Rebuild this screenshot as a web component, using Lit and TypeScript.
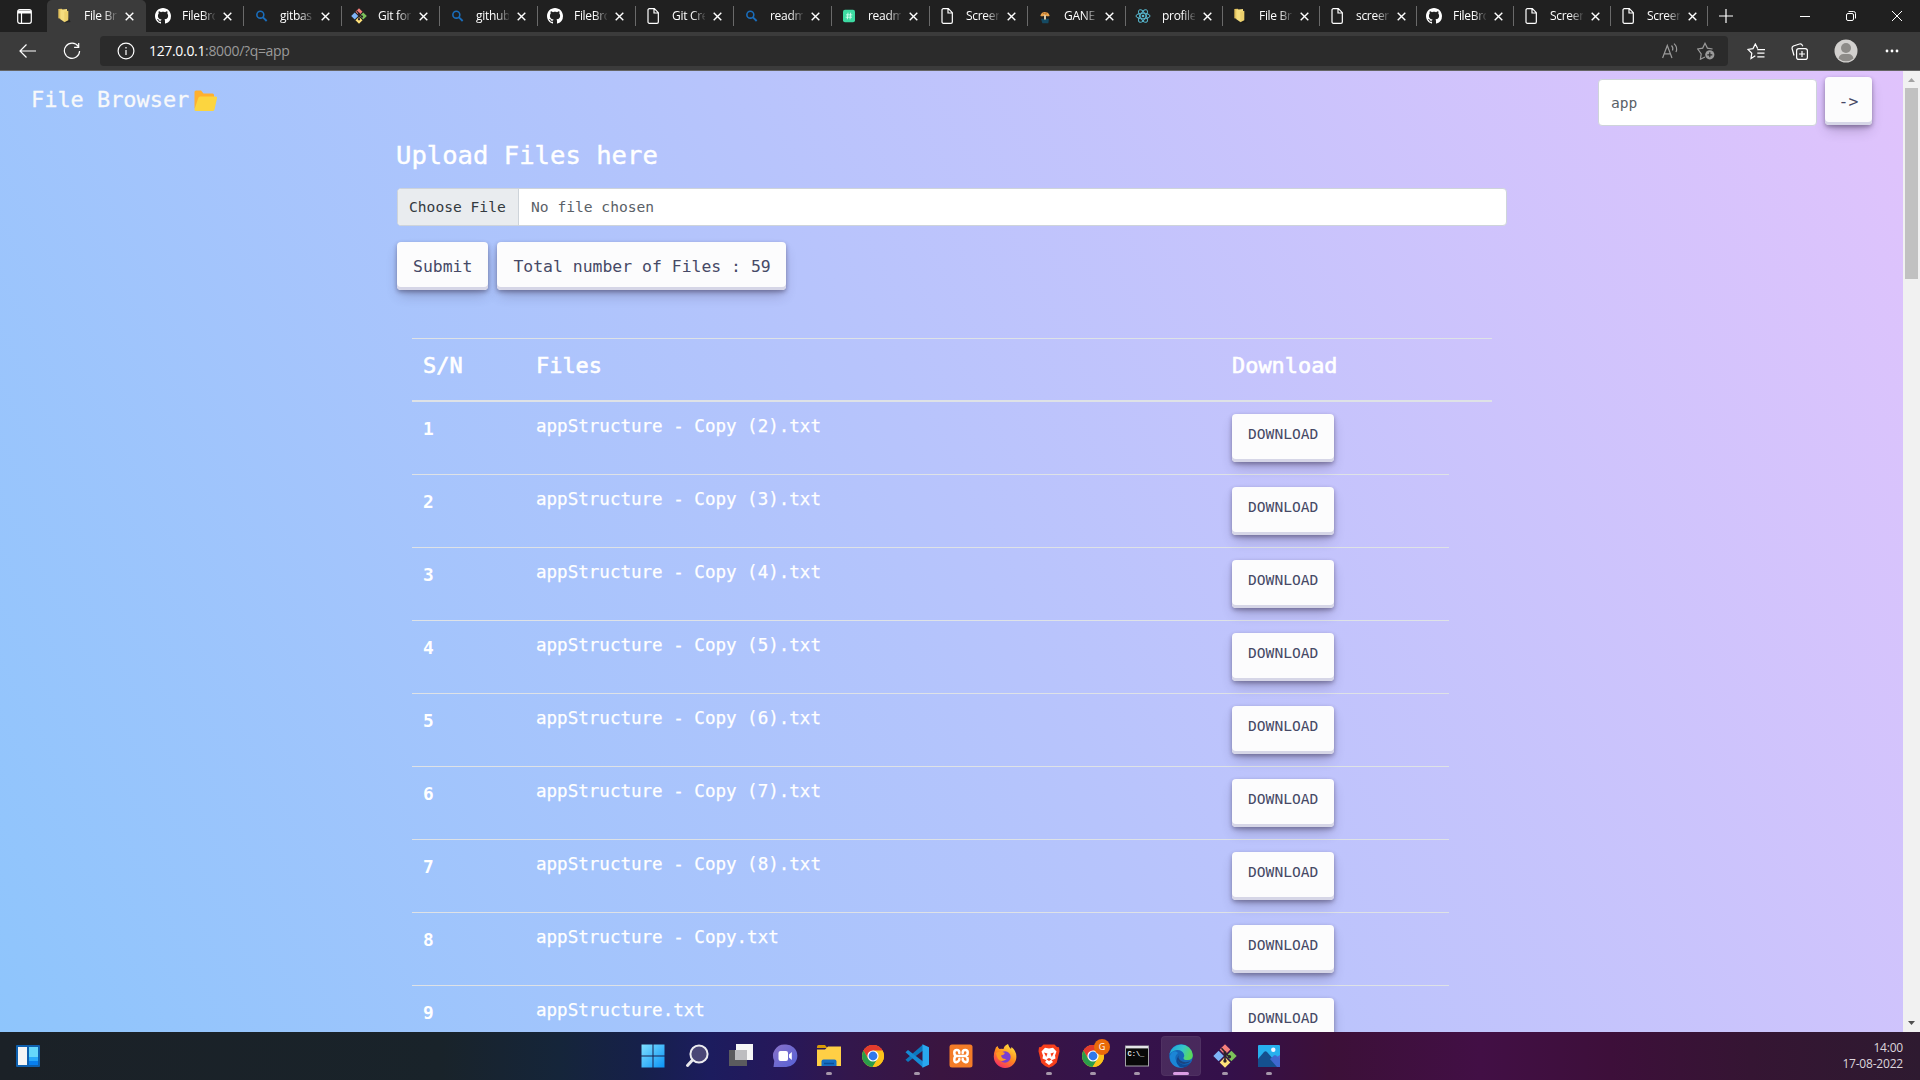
import { LitElement, html, css, svg, TemplateResult } from "lit";
import { customElement, property } from "lit/decorators.js";
import { classMap } from "lit/directives/class-map.js";

const chromeBall = svg`
  <circle cx="12" cy="12" r="11" fill="#fbc116"/>
  <path d="M12 12L2.5 6.5A11 11 0 0 1 21.5 6.5Z" fill="#e33b2e"/>
  <path d="M12 6.5H21.5A11 11 0 0 0 2.5 6.5L7.2 14.7Z" fill="#e33b2e"/>
  <path d="M2.5 6.5A11 11 0 0 0 11.6 23L16.6 14.8 12 12 7.2 14.7Z" fill="#2a9d4a"/>
  <path d="M21.5 6.5A11 11 0 0 1 11.6 23L16.8 14.6 12 6.5Z" fill="#fcc31a"/>
  <circle cx="12" cy="12" r="5.6" fill="#fff"/><circle cx="12" cy="12" r="4.4" fill="#3079ea"/>`;

const gitBash = svg`
  <path d="M12 .3L17.300 5.600 12 10.900 6.700 5.600Z" fill="#f47f7c"/>
  <path d="M18.400 6.700L23.700 12 18.400 17.300 13.100 12Z" fill="#7cc15a"/>
  <path d="M5.600 6.700L10.900 12 5.600 17.300 .3 12Z" fill="#7fb4f7"/>
  <path d="M12 13.100L17.300 18.400 12 23.700 6.700 18.400Z" fill="#ffe27a"/>
  <path d="M8.500 4.300L12 8V17M12 9l4.500 4" stroke="#2d2229" stroke-width="1.600" fill="none"/>
  <circle cx="12" cy="9" r="1.700" fill="#2d2229"/><circle cx="12" cy="17" r="1.700" fill="#2d2229"/><circle cx="16.500" cy="12.800" r="1.700" fill="#2d2229"/>`;

const favicons: Record<string, TemplateResult> = {
  folder: svg`<path d="M18 13l4 8-9 1z" fill="#141414" opacity=".55"/><path d="M3.500 1.500l5-.5 1 .8V17l-6-1.500Z" fill="#e3c25e"/><path d="M6.500 2.500L16.500 1.500V17l-4 4-6-4Z" fill="#f5dd7e"/><path d="M12.500 5.500L18.500 4v14.500l-6 3Z" fill="#ecd06c"/>`,
  github: svg`<path transform="scale(1.5)" fill="#fff" d="M8 0C3.58 0 0 3.58 0 8c0 3.54 2.29 6.53 5.47 7.59.4.07.55-.17.55-.38 0-.19-.01-.82-.01-1.49-2.01.37-2.53-.49-2.69-.94-.09-.23-.48-.94-.82-1.13-.28-.15-.68-.52-.01-.53.63-.01 1.08.58 1.23.82.72 1.21 1.87.87 2.33.66.07-.52.28-.87.51-1.07-1.78-.2-3.64-.89-3.64-3.95 0-.87.31-1.59.82-2.15-.08-.2-.36-1.02.08-2.12 0 0 .67-.21 2.2.82.64-.18 1.32-.27 2-.27s1.36.09 2 .27c1.53-1.04 2.2-.82 2.2-.82.44 1.1.16 1.92.08 2.12.51.56.82 1.27.82 2.15 0 3.07-1.87 3.75-3.65 3.95.29.25.54.73.54 1.48 0 1.07-.01 1.93-.01 2.2 0 .21.15.46.55.38A8.01 8.01 0 0 0 16 8c0-4.42-3.58-8-8-8z"/>`,
  search: svg`<circle cx="11" cy="10" r="5.2" fill="none" stroke="#1a6dbb" stroke-width="2.4"/><path d="M15 14l5.5 5.5" stroke="#1a6dbb" stroke-width="2.8"/>`,
  git: gitBash,
  doc: svg`<path d="M4.500 3a2 2 0 0 1 2-2h7.500l6 6v14a2 2 0 0 1-2 2h-11.500a2 2 0 0 1-2-2ZM13.500 1v6.500h6.500" fill="none" stroke="#fff" stroke-width="1.800"/>`,
  hash: svg`<rect x="3" y="2.500" width="18" height="19" rx="3" fill="#3ddaa2"/><path d="M10.500 7l-1 10M14.500 7l-1 10M7.500 10.300h9.500M7 13.800h9.500" stroke="#d8fff0" stroke-width="1.300"/>`,
  tree: svg`<path d="M5 12a7.200 8 0 0 1 14 0q-3 1-5 0l-2 1-2-1q-2 1-5 0Z" fill="#e9a24a"/><path d="M9 7l2 2M14 6l-1 4" stroke="#9c5c22" stroke-width="1.500"/><path d="M10.500 10h3v9h-3z" fill="#d9c9a8"/><path d="M6 16h4l2 2 2-2h4l-1 7H8Z" fill="#154a63"/>`,
  react: svg`<g fill="none" stroke="#58b9d0" stroke-width="1.500"><ellipse cx="12" cy="12" rx="10.500" ry="4.200"/><ellipse cx="12" cy="12" rx="10.500" ry="4.200" transform="rotate(60 12 12)"/><ellipse cx="12" cy="12" rx="10.500" ry="4.200" transform="rotate(120 12 12)"/></g><circle cx="12" cy="12" r="2" fill="#58b9d0"/>`,
};

const tabs: Array<[string, string]> = [
  ["folder", "File Br"], ["github", "FileBro"], ["search", "gitbas"], ["git", "Git for"],
  ["search", "github"], ["github", "FileBro"], ["doc", "Git Cre"], ["search", "readm"],
  ["hash", "readm"], ["doc", "Screen"], ["tree", "GANE"], ["react", "profile"],
  ["folder", "File Br"], ["doc", "screen"], ["github", "FileBro"], ["doc", "Screen"], ["doc", "Screen"],
];

@customElement("browser-tab")
class BrowserTab extends LitElement {
  @property() icon = "";
  @property() label = "";
  @property({ type: Boolean }) active = false;
  static styles = css`
    :host { display: block; flex: none; height: 32px; }
    .tab { display: flex; align-items: center; height: 32px; box-sizing: border-box; position: relative; padding-left: 9px; }
    .tab.active { background: #3b3b3b; border-radius: 5px 5px 0 0; margin-left: -1px; padding-left: 9px; }
    .tab:not(.active)::after { content: ""; position: absolute; right: 0; top: 6px; width: 1px; height: 20px; background: #6a6a6a; }
    .fav { width: 16px; height: 16px; flex: none; }
    .label { width: 33px; margin-left: 11px; white-space: nowrap; color: #fff;
      font: 12px/18px "Open Sans", "Noto Sans", sans-serif; letter-spacing: -0.3px;
      -webkit-mask-image: linear-gradient(90deg, #000 60%, transparent 105%); mask-image: linear-gradient(90deg, #000 60%, transparent 105%); }
    .active .label { margin-left: 12px; }
    .x { width: 9px; height: 9px; margin-left: 8px; margin-top: 1px; flex: none; }
  `;
  render() {
    return html`<div class=${classMap({ tab: true, active: this.active })}>
      <svg class="fav" viewBox="0 0 24 24">${favicons[this.icon]}</svg>
      <span class="label">${this.label}</span>
      <svg class="x" viewBox="0 0 9 9"><path d="M.7 .7l7.600 7.600M8.300 .7L.7 8.300" stroke="#fff" stroke-width="1.400"/></svg>
    </div>`;
  }
}

@customElement("browser-chrome")
class BrowserChrome extends LitElement {
  static styles = css`
    :host { display: block; }
    svg { display: block; flex: none; fill: none; stroke: #fff; stroke-width: 1.2; }
    .strip { display: flex; height: 32px; background: #202020; }
    .menu { width: 48px; display: flex; align-items: center; justify-content: center; box-sizing: border-box; }
    .wide { width: 98px; }
    .narrow { width: 97px; }
    .plus { width: 35px; display: flex; align-items: center; justify-content: center; }
    .window { margin-left: auto; display: flex; align-items: center; }
    .window span { width: 46px; display: flex; justify-content: center; }
    .bar { display: flex; align-items: center; height: 38px; background: #3b3b3b; border-bottom: 1px solid #656565; }
    .nav { display: flex; width: 100px; align-items: center; padding-left: 19px; gap: 27px; box-sizing: border-box; }
    .url { display: flex; align-items: center; width: 1628px; height: 30px; border-radius: 4px; background: #2b2b2b; padding: 0 14px 0 17px; box-sizing: border-box;
      font: 14px/20px "Open Sans", "Noto Sans", sans-serif; letter-spacing: -0.33px; color: #9a9a9a; margin-top: -1px; }
    .url b { font-weight: 400; color: #fff; }
    .addr { margin-left: 14px; flex: 1; }
    .url svg.dim { stroke: #9b9b9b; }
    .url .star { margin-left: 18px; margin-right: -1px; }
    .tools { display: flex; align-items: center; flex: 1; padding-left: 19px; }
    .coll { margin-left: 25px; }
    .avatar { margin-left: 26px; }
    .dots { margin-left: 27px; }
  `;
  render() {
    return html`
      <div class="strip">
        <div class="menu"><svg width="15" height="15" viewBox="0 0 15 15"><rect x=".7" y=".7" width="13.600" height="13.600" rx="2"/><path d="M1 3h13" stroke-width="3"/><path d="M4.500 4v10"/></svg></div>
        ${tabs.map(([icon, label], i) => html`<browser-tab class=${i < 11 ? "wide" : "narrow"} icon=${icon} label=${label} ?active=${i === 0}></browser-tab>`)}
        <div class="plus"><svg width="14" height="14" viewBox="0 0 14 14"><path d="M7 0v14M0 7h14"/></svg></div>
        <div class="window">
          <span><svg width="10" height="10" viewBox="0 0 10 10"><path d="M0 5.500h10" stroke-width="1"/></svg></span>
          <span><svg width="10" height="10" viewBox="0 0 10 10"><rect x=".5" y="2.500" width="7" height="7" rx="1.500" stroke-width="1"/><path d="M2.500.5h5a2 2 0 0 1 2 2v5" stroke-width="1"/></svg></span>
          <span><svg width="10" height="10" viewBox="0 0 10 10"><path d="M0 0l10 10M10 0L0 10" stroke-width="1"/></svg></span>
        </div>
      </div>
      <div class="bar">
        <div class="nav">
          <svg width="17" height="14" viewBox="0 0 17 14"><path d="M17 7H1.200M7.500 .5L1 7l6.500 6.500"/></svg>
          <svg width="18" height="18" viewBox="0 0 18 18"><path d="M15.300 4.500A7.600 7.600 0 1 0 16.600 9M15.700 1v4.300h-4.600"/></svg>
        </div>
        <div class="url">
          <svg width="18" height="18" viewBox="0 0 18 18"><circle cx="9" cy="9" r="7.900"/><path d="M9 8v5M9 5v1.500"/></svg>
          <span class="addr"><b>127.0.0.1</b>:8000/?q=app</span>
          <svg class="dim" width="17" height="16" viewBox="0 0 17 16"><path d="M.6 15L5.300 2.500 10 15M2.200 10.800h6.200M9.500 2.500q2 2 1 5M12 .6q4 3.400 2 8.400"/></svg>
          <svg class="dim star" width="18" height="18" viewBox="0 0 18 18"><path d="M8 15l-4.600 2.200 .8-5.300L.7 7l5-.9L8 1.300l2.400 4.800 5.200.9"/><circle cx="12.800" cy="12.800" r="4.600" fill="#9b9b9b" stroke="none"/><path d="M12.800 10.300v5M10.300 12.800h5" stroke="#2b2b2b"/></svg>
        </div>
        <div class="tools">
          <svg width="19" height="17" viewBox="0 0 19 17"><path d="M8.300 12.800L4 15.500l.8-5.300L1 6.500l5-.9L8.300 1l2.400 4.600M10.300 6.600H18M10.300 10.200h7.200M10.300 13.800h7.200"/></svg>
          <svg class="coll" width="17" height="17" viewBox="0 0 17 17"><rect x="5.600" y="5.600" width="10.800" height="10.800" rx="2.200"/><path d="M11 8v6M8 11h6M3 12.500L1.200 6q-.6-2 1.200-3L8.500 1q2-.6 2.800 1.200l.5 1"/></svg>
          <svg class="avatar" width="24" height="24" viewBox="0 0 24 24" stroke="none"><circle cx="12" cy="12" r="11.500" fill="#d2d0ce" stroke="none"/><circle cx="12" cy="9" r="5" fill="#8d8b88" stroke="none"/><path d="M4.500 19.500q1-4.500 5-4.500h5q4 0 5 4.500a11.500 11.500 0 0 1-15 0Z" fill="#8d8b88" stroke="none"/></svg>
          <svg class="dots" width="14" height="4" viewBox="0 0 14 4"><g fill="#fff" stroke="none"><circle cx="2" cy="2" r="1.400"/><circle cx="7" cy="2" r="1.400"/><circle cx="12" cy="2" r="1.400"/></g></svg>
        </div>
      </div>`;
  }
}

const files = [
  "appStructure - Copy (2).txt", "appStructure - Copy (3).txt", "appStructure - Copy (4).txt",
  "appStructure - Copy (5).txt", "appStructure - Copy (6).txt", "appStructure - Copy (7).txt",
  "appStructure - Copy (8).txt", "appStructure - Copy.txt", "appStructure.txt",
];

@customElement("file-page")
class FilePage extends LitElement {
  static styles = css`
    :host { display: flex; height: 961px; overflow: hidden; font-family: "DejaVu Sans Mono", "Liberation Mono", monospace; }
    .content { width: 1903px; height: 961px; overflow: hidden; background: linear-gradient(62deg, #8ec5fc 0%, #e0c3fc 100%); }
    .top { display: flex; height: 60px; padding: 6px 31px 0 31px; box-sizing: border-box; align-items: flex-start; }
    .brand { display: flex; align-items: center; height: 44px; font-size: 21.92px; color: #f8f9fa; flex: 1; -webkit-text-stroke: .3px #f8f9fa; }
    .brand svg { width: 25px; height: 22px; margin: 3px 0 0 4px; }
    .query { width: 219px; height: 47px; margin: 2px 8px 0 0; box-sizing: border-box; border: 1px solid #ced4da; border-radius: 4px; background: #fff; color: #5a6168; font-size: 14.62px; line-height: 46px; padding-left: 12px; }
    .btn { display: inline-flex; align-items: center; height: 48px; box-sizing: border-box; padding: 0 16px; border-radius: 4px; background: #fcfcfd; color: #464966; font-size: 16.44px; white-space: pre;
      box-shadow: rgba(45,35,66,.4) 0 2px 4px, rgba(45,35,66,.3) 0 7px 13px -3px, #d6d6e7 0 -3px 0 inset; }
    .top .btn { width: 47px; padding: 1px 0 0; justify-content: center; }
    .body { width: 1110px; margin-left: 397px; }
    h3 { margin: 0; font-weight: 400; font-size: 25.58px; line-height: 34px; color: #fff; padding-top: 7px; -webkit-text-stroke: .4px #fff; margin-left: -1px; }
    .picker { display: flex; height: 38px; margin-top: 16px; box-sizing: border-box; border: 1px solid #ced4da; border-radius: 4px; overflow: hidden; background: #fff; font-size: 14.62px; line-height: 36px; color: #5a6168; }
    .choose { width: 121px; box-sizing: border-box; padding-left: 11px; background: #e9ecef; color: #343a40; border-right: 1px solid #ced4da; }
    .none { padding-left: 12px; }
    .actions { display: flex; gap: 9px; margin-top: 16px; }
    .actions .total { padding-right: 15px; }
    .table { margin: 48px 15px 0; color: #fff; }
    .head, .row { display: grid; grid-template-columns: 112px 696px 1fr; box-sizing: border-box; }
    .head > span, .row > span { padding-left: 12px; }
    .head { height: 64px; border-top: 1px solid #dee2e6; border-bottom: 2px solid #dee2e6; font-size: 21.92px; line-height: 54px; -webkit-text-stroke: .6px #fff; }
    .head > .sn, .row > .num { padding-left: 11px; }
    .row { width: 1037px; height: 73px; border-bottom: 1px solid #dee2e6; font-size: 17.54px; }
    .num { font-weight: 700; line-height: 53px; font-size: 17.8px; }
    .name { line-height: 48px; -webkit-text-stroke: .25px #fff; }
    .row .btn { margin-top: 12px; font-size: 14.62px; padding-bottom: 10px; }
    .scroll { display: flex; flex-direction: column; align-items: center; width: 17px; background: #f1f1f1; box-sizing: border-box; }
    .arrow { width: 17px; height: 17px; display: block; }
    .thumb { width: 13px; height: 191px; background: #c1c1c1; margin-bottom: auto; }
  `;
  render() {
    return html`
      <div class="content">
        <div class="top">
          <div class="brand">File Browser<svg viewBox="0 0 24 22"><path d="M1 2a1.500 1.500 0 0 1 1.500-1.500h5l2.500 3h9A1.500 1.500 0 0 1 20.500 5v14H2.500A1.500 1.500 0 0 1 1 17.500Z" fill="#ffb02e"/><path d="M4.800 8a2 2 0 0 1 2-1.600h15.200a1.500 1.500 0 0 1 1.500 1.900L21 19.500a2 2 0 0 1-2 1.500H2.500A1.500 1.500 0 0 1 1.100 19Z" fill="#fcd53f"/></svg></div>
          <div class="query">app</div><div class="btn">-&gt;</div>
        </div>
        <div class="body">
          <h3>Upload Files here</h3>
          <div class="picker"><span class="choose">Choose File</span><span class="none">No file chosen</span></div>
          <div class="actions"><div class="btn">Submit</div><div class="btn total">Total number of Files : 59</div></div>
          <div class="table">
            <div class="head"><span class="sn">S/N</span><span>Files</span><span>Download</span></div>
            ${files.map((f, i) => html`<div class="row"><span class="num">${i + 1}</span><span class="name">${f}</span><span><div class="btn">DOWNLOAD</div></span></div>`)}
          </div>
        </div>
      </div>
      <div class="scroll">
        <svg class="arrow" viewBox="0 0 17 17"><path d="M5 11l3.500-4 3.500 4z" fill="#a3a3a3"/></svg>
        <div class="thumb"></div>
        <svg class="arrow" viewBox="0 0 17 17"><path d="M5 6l3.500 4L12 6z" fill="#505050"/></svg>
      </div>`;
  }
}

interface App { art: TemplateResult; state?: string; }
const apps: App[] = [
  { art: svg`<defs><linearGradient id="w" x1="0" y1="0" x2="1" y2="1"><stop offset="0" stop-color="#7fe0ff"/><stop offset="1" stop-color="#0a93f5"/></linearGradient></defs><path d="M.5.5h11v11H.5zM12.500.5h11v11h-11zM.5 12.500h11v11H.5zM12.500 12.500h11v11h-11z" fill="url(#w)"/>` },
  { art: svg`<path d="M8 15.500L2.500 21.500" stroke="#e8e8ec" stroke-width="3" stroke-linecap="round"/><circle cx="14" cy="10" r="8.600" fill="#4a4676" stroke="#ececf0" stroke-width="2"/>` },
  { art: svg`<rect x="7" y="0" width="17" height="16" fill="#f6f6f6"/><rect x="0" y="6" width="18" height="16" fill="#5b5b5e"/><rect x="6" y="6" width="12" height="10" fill="#bdbdc0"/>` },
  { art: svg`<defs><linearGradient id="c" x1="0" y1="0" x2="1" y2="1"><stop offset="0" stop-color="#8a72c8"/><stop offset="1" stop-color="#5561d6"/></linearGradient></defs><path d="M12 .5A11.300 11.300 0 1 1 12 23H.5l.8-6A11.300 11.300 0 0 1 12 .5Z" fill="url(#c)"/><rect x="5.500" y="7" width="9.500" height="10" rx="2" fill="#fff"/><path d="M16 10.500l2.800-2.500v8L16 13.500z" fill="#fff"/>` },
  { state: "open", art: svg`<path d="M0 2.500Q0 1 1.500 1H8l2.500 3H0Z" fill="#d99a08"/><path d="M0 5.500h8l3-3h13V22H0Z" fill="#ffcf45"/><path d="M4.500 22v-4.500q0-2 2-2h11q2 0 2 2V22Z" fill="#1670c4"/><path d="M7 19.500h10" stroke="#0b4f98" stroke-width="1.500"/>` },
  { art: chromeBall },
  { state: "open", art: svg`<path d="M18 .5v6L3 18 .5 15.800Z" fill="#0c77bd"/><path d="M.5 8.200L3 6 18 17.500v6Z" fill="#168bd4"/><path d="M17.500.3L24 3.200v17.600l-6.500 2.900Z" fill="#29a8ef"/>` },
  { art: svg`<rect x=".5" y=".5" width="23" height="23" rx="2.500" fill="#f47c28"/><path d="M10.300 9V8.500Q10.300 6 7.800 6T5.300 8.500Q5.300 12 8 12 5.300 12 5.300 15.500T7.800 18 10.300 15.500V15M13.700 9V8.500Q13.700 6 16.200 6T18.700 8.500Q18.700 12 16 12 18.700 12 18.700 15.500T16.200 18 13.700 15.500V15M8 12h8" fill="none" stroke="#fff" stroke-width="2.500" stroke-linecap="round"/>` },
  { art: svg`<defs><linearGradient id="f" x1=".8" y1="0" x2=".2" y2="1"><stop offset="0" stop-color="#ffe642"/><stop offset=".5" stop-color="#ff8a1d"/><stop offset="1" stop-color="#f5246c"/></linearGradient></defs><path d="M2 6q.5-3 2.500-4 .5 2 2 3 2-.6 4 0 .5-3.500 4.500-5 .8 3 3 5l.5-2q5 4 4.900 9.700A11.200 11.200 0 0 1 .8 12.500Q.7 9 2 6Z" fill="url(#f)"/><circle cx="12" cy="13" r="5.700" fill="#7b3fd0"/><path d="M3 9q4-3 9 0-1 2-4 2.500 1 4 5.500 3.500-5 4-8.500 0Q3.500 12.500 3 9Z" fill="#ff9a22"/>` },
  { state: "open", art: svg`<path d="M6.500.5h11L20 3l2 .3 .5 4-2.800 11.500q-3 3.500-7.700 5-4.700-1.500-7.700-5L1.500 7.300l.5-4L4 3Z" fill="#f8401c"/><path d="M12 4.500l4-.8 3.500 3.800-1.500 4 .5 3-4 1.800L16 18l-4 3-4-3 1.500-1.700-4-1.800 .5-3-1.500-4L8 3.700Z" fill="#fff"/><path d="M7 8.500l3.500 1-1.300 3.500zM17 8.500l-3.500 1 1.300 3.500zM9.500 15.300L12 14l2.500 1.300L12 17z" fill="#f8401c"/>` },
  { state: "open", art: svg`${chromeBall}<circle cx="21" cy="3" r="8" fill="#ea6a0a"/><text x="21" y="6.200" text-anchor="middle" font-size="9" font-family="Open Sans, sans-serif" fill="#fff">G</text>` },
  { state: "open", art: svg`<rect x=".5" y="2" width="23" height="20" fill="#080808" stroke="#a4a4a8"/><path d="M1 3.200h22" stroke="#e3e3e6" stroke-width="2.400"/><text x="2.500" y="12" font-size="7" font-weight="700" font-family="Liberation Mono, monospace" fill="#eee">C:\\_</text>` },
  { state: "active", art: svg`<defs><linearGradient id="e" x1="0" y1="0" x2="1" y2=".3"><stop offset="0" stop-color="#1c9ee0"/><stop offset=".6" stop-color="#35c7c9"/><stop offset="1" stop-color="#5ad85c"/></linearGradient></defs><circle cx="12" cy="12" r="11.800" fill="#1667b8"/><path d="M.4 10.500A11.800 11.800 0 0 1 23.800 11q.2 5-5.300 5-4.500 0-4-2.300 1.500-1.700.3-4Q12.500 5.500 8 6 3 6.500.4 10.500Z" fill="url(#e)"/><path d="M9 9Q4.500 12.500 7.500 18q2.500 4 7 5.300Q5 25 1.500 17-.5 11 3.500 8 7 6 9 9Z" fill="#1b86d6"/><path d="M9.500 12q-2 4.500 2 7.500 5 3 10-.7-4 6-11 4Q5 18 9.500 12Z" fill="#0d4a96"/><path d="M10 10.500q-2 3 1.500 6 4 3 10.500.5-3 3-7 3-5.500-.5-6.300-5-.2-3 1.300-4.500Z" fill="#23264f" opacity=".55"/>` },
  { state: "open", art: gitBash },
  { state: "open", art: svg`<rect x="1" y="1" width="22" height="22" rx="1" fill="#27b0ee"/><path d="M23 11l-8 5 8 7Z" fill="#4e67d4"/><path d="M1 15l6-7q1.500-1.500 3 0L23 23H1Z" fill="#15508e"/><path d="M13 15l4-3.500q1-.8 2 0L23 15v8h-3Z" fill="#3f68cf"/><circle cx="16.300" cy="5.700" r="2.200" fill="#f4f6ff"/>` },
];

@customElement("task-bar")
class TaskBar extends LitElement {
  static styles = css`
    :host { display: grid; grid-template-columns: 1fr auto 1fr; height: 48px; box-sizing: border-box; align-items: center; overflow: hidden;
      background: linear-gradient(90deg, #1b2127 0, #19232a 440px, #15253a 560px, #16204a 640px, #1c1c5e 710px, #26185a 780px, #33174c 850px, #3a1540 940px, #35134a 1100px, #34104a 1230px, #3c1038 1330px, #420f45 1480px, #3d0f3a 1610px, #351533 1750px, #2e1a30 1920px); }
    .widgets { width: 24px; height: 22px; margin-left: 16px; }
    .apps { display: flex; padding-left: 2px; }
    .app { display: flex; flex-direction: column; align-items: center; width: 40px; height: 40px; margin: 0 2px; border-radius: 4px; box-sizing: border-box; padding-top: 8px; }
    .app svg { width: 24px; height: 24px; overflow: visible; flex: none; }
    .app.open::after, .app.active::after { content: ""; width: 6px; height: 3px; border-radius: 2px; background: #a596aa; margin-top: 4px; }
    .app.active { background: rgba(255,255,255,.1); box-shadow: inset 0 0 0 1px rgba(255,255,255,.04); }
    .app.active::after { width: 16px; background: #dc9de4; }
    .clock { justify-self: end; margin-right: 17px; text-align: right; color: #ddd5dc; font: 12px/16px "Open Sans", "Noto Sans", sans-serif; letter-spacing: -0.2px; }
  `;
  render() {
    return html`
      <svg class="widgets" viewBox="0 0 24 22"><rect width="24" height="22" rx="1" fill="#0e60ae"/><rect x="2" y="2" width="9" height="18" fill="#f5f5f5"/><rect x="13" y="2" width="9" height="10" fill="#65d7fb"/><rect x="13" y="12" width="9" height="4" fill="#28a9fa"/><rect x="13" y="16" width="9" height="4" fill="#087fee"/></svg>
      <div class="apps">${apps.map((a) => html`<div class=${classMap({ app: true, open: a.state === "open", active: a.state === "active" })}><svg viewBox="0 0 24 24">${a.art}</svg></div>`)}</div>
      <div class="clock">14:00<br>17-08-2022</div>`;
  }
}

@customElement("app-root")
class AppRoot extends LitElement {
  static styles = css`
    :host { display: flex; flex-direction: column; width: 1920px; height: 1080px; overflow: hidden; }
  `;
  render() {
    return html`<browser-chrome></browser-chrome><file-page></file-page><task-bar></task-bar>`;
  }
}
